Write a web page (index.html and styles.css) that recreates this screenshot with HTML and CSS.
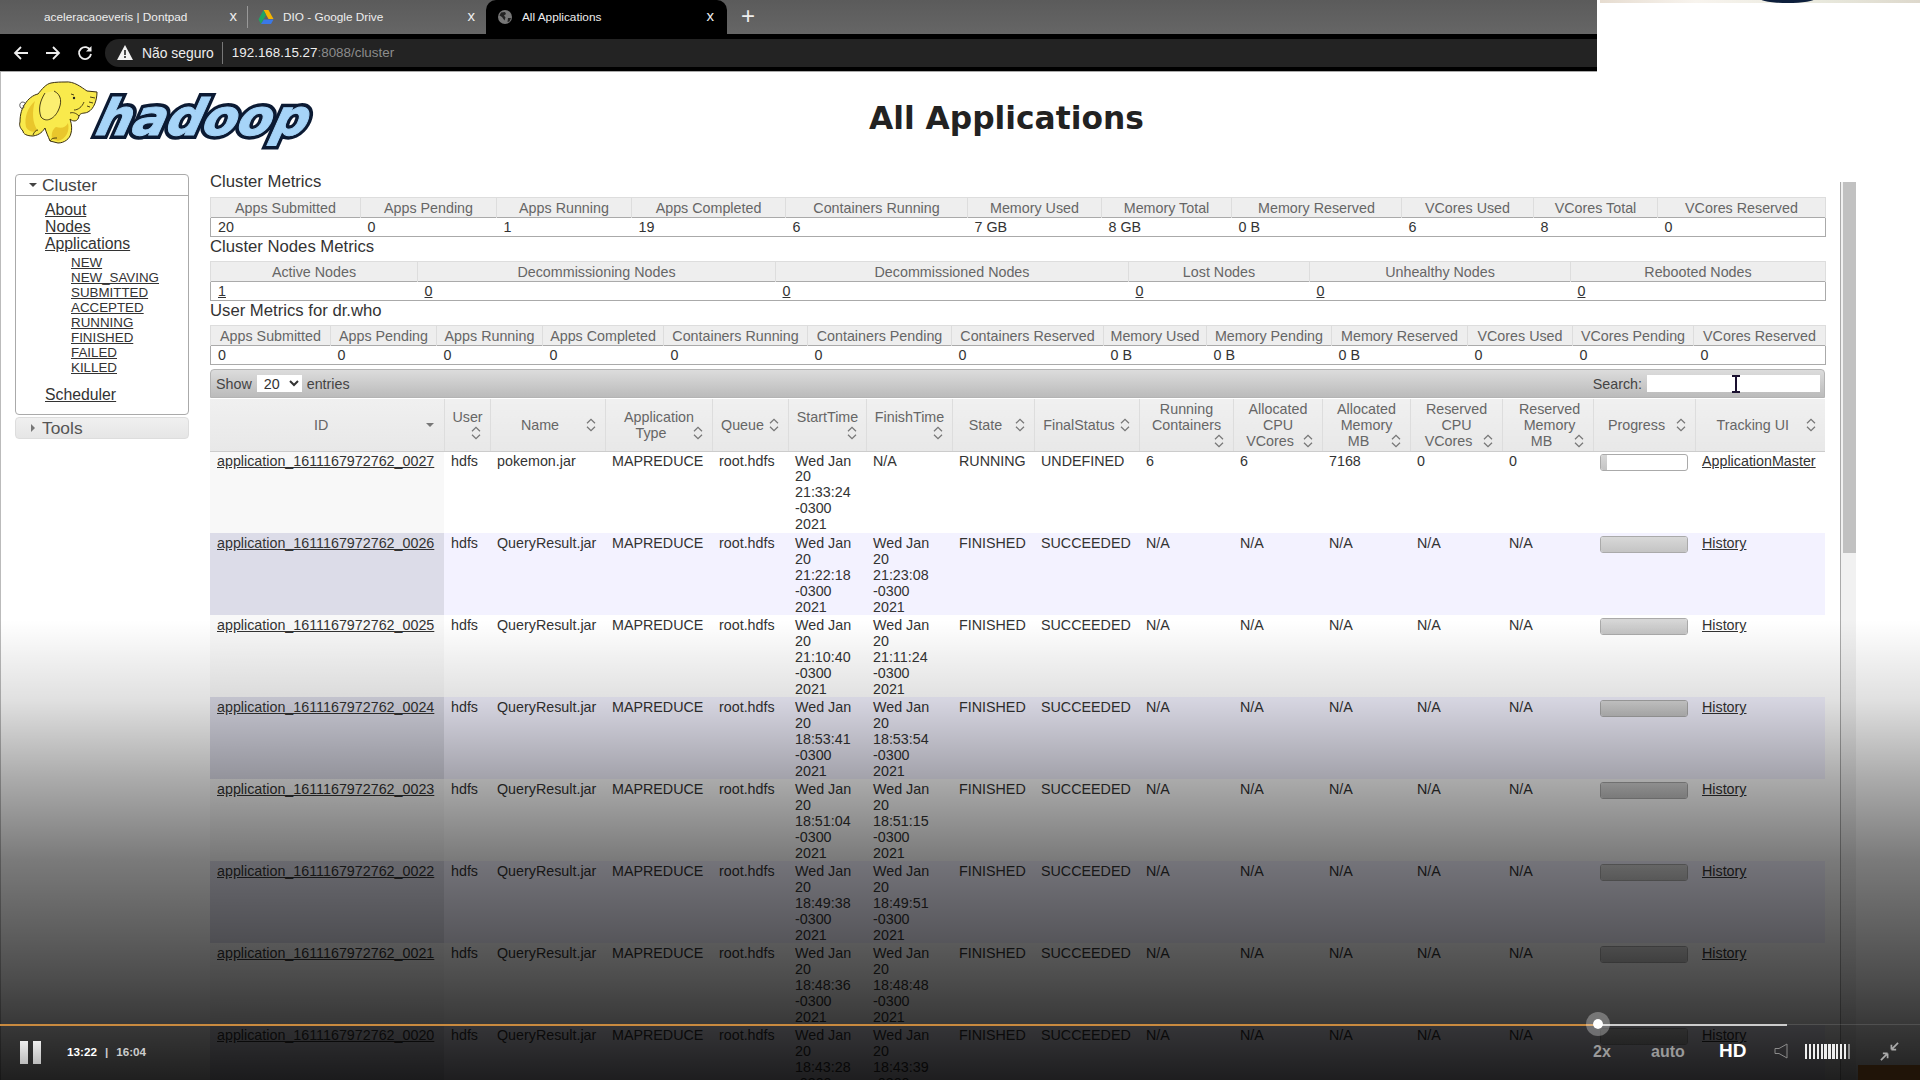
FILE: index.html
```html
<!DOCTYPE html>
<html lang="pt">
<head>
<title>All Applications</title>
<meta charset="UTF-8">
<link rel="stylesheet" href="styles.css">
</head>
<body>
<svg class="defs" width="0" height="0">
 <symbol id="sort" viewBox="0 0 10 14"><path d="M1.5 5.5 5 2l3.5 3.5M1.5 8.5 5 12l3.5-3.5" fill="none" stroke="#777" stroke-width="1.1"/></symbol>
</svg>

<header class="browser">
 <div class="tabs">
  <div class="tab tab-first"><span class="tab-title">aceleracaoeveris | Dontpad</span><span class="tab-x">x</span></div>
  <div class="tab tab-second">
   <svg class="favicon" viewBox="0 0 16 16"><path d="M5.500 1h5l5 9h-5z" fill="#f4b400"/><path d="M5.500 1 0.500 10.500 3 15l5-9z" fill="#1fa463"/><path d="M3 15h10l2.500-4.500H5.800z" fill="#3a78e7"/></svg>
   <span class="tab-title">DIO - Google Drive</span><span class="tab-x">x</span>
  </div>
  <div class="tab tab-active">
   <svg class="favicon" viewBox="0 0 16 16"><circle cx="8" cy="8" r="7" fill="#777"/><path d="M4 3.500 8 3l1 2-2 1.500 1.500 2-1 3L5 8 2.500 6.500zM11 9h3l-1.500 3.500L10.500 13z" fill="#222"/></svg>
   <span class="tab-title">All Applications</span><span class="tab-x">x</span>
  </div>
  <div class="tab-new">+</div>
 </div>
 <div class="toolbar">
  <svg class="nav-icon" viewBox="0 0 18 18"><path d="M16 9H3M9 3 3 9l6 6" fill="none" stroke="#eee" stroke-width="1.800"/></svg>
  <svg class="nav-icon" viewBox="0 0 18 18"><path d="M2 9h13M9 3l6 6-6 6" fill="none" stroke="#eee" stroke-width="1.800"/></svg>
  <svg class="nav-icon" viewBox="0 0 18 18"><path d="M14.500 6.500A6 6 0 1 0 15 10" fill="none" stroke="#eee" stroke-width="1.800"/><path d="M15.500 2v5.500H10z" fill="#eee"/></svg>
  <div class="omnibox">
   <svg class="warn" viewBox="0 0 16 15"><path d="M8 0 16 15H0z" fill="#f2f2f2"/><path d="M7.200 5h1.600v5H7.200zM7.200 11h1.600v2H7.200z" fill="#222"/></svg>
   <span class="insecure">Não seguro</span>
   <span class="url"><b>192.168.15.27</b>:8088/cluster</span>
  </div>
 </div>
</header>

<div class="page">
 <div class="page-head">
  <svg class="logo" viewBox="0 0 306 72" width="306" height="72">
   <text class="logo-word logo-shade" x="0" y="55" textLength="212" lengthAdjust="spacingAndGlyphs" transform="translate(78 0) skewX(-14) translate(14 0)">hadoop</text>
   <text class="logo-word" x="0" y="55" textLength="212" lengthAdjust="spacingAndGlyphs" transform="translate(78 0) skewX(-14) translate(14 0)">hadoop</text>
   <g transform="translate(2 1)">
    <path d="M47 1C56 0 63 6 69 10L79 11C79 19 76 28 70 31 66 33 63 31 61 35 60 41 55 41 52 38 54 44 54 49 53 52 52 58 46 62 40 62L32 60C30 55 28 51 27 47 25 50 22 54 15 55 9 55 5 53 5 50 2 47 1 44 2 41 2 33 4 27 7 23 10 18 15 14 20 13 24 8 28 3 33 2 38 1 43 1 47 1Z" fill="#f9ea4c" stroke="#3a2f10" stroke-width="1"/>
    <path d="M8 46C6 36 10 26 17 20 14 30 14 42 20 50 15 52 10 50 8 46ZM34 58C33 52 35 48 38 46 44 48 48 46 50 42 52 50 48 58 40 60Z" fill="#e9c62c"/>
    <path d="M27 12C22 20 20 28 23 36 28 42 36 38 40 30 44 22 44 14 36 10" fill="#fbef70" stroke="#3a2f10" stroke-width=".9"/>
    <path d="M53 13l3 1M66 21c-2 5-6 8-10 8M72 16l5 1M71 21l4 1M69 25l3 1M61 35c-3-3-6-4-9-3M32 60c2-3 4-3 7-3M15 54c1-3 3-5 5-5" fill="none" stroke="#3a2f10" stroke-width=".9"/>
    <path d="M7 22C3 19 0 24 3 27c2 2 4-1 2-3" fill="none" stroke="#555" stroke-width="1"/>
    <circle cx="56" cy="17" r="1.200" fill="#222"/>
   </g>
  </svg>
  <h1 class="page-title">All Applications</h1>
 </div>

 <div class="layout">
  <nav class="side">
   <div class="side-box">
    <h3 class="side-title"><i class="arrow-down"></i>Cluster</h3>
    <ul class="side-links">
     <li><a href="#">About</a></li>
     <li><a href="#">Nodes</a></li>
     <li><a href="#">Applications</a>
      <ul class="side-sub">
       <li><a href="#">NEW</a></li>
       <li><a href="#">NEW_SAVING</a></li>
       <li><a href="#">SUBMITTED</a></li>
       <li><a href="#">ACCEPTED</a></li>
       <li><a href="#">RUNNING</a></li>
       <li><a href="#">FINISHED</a></li>
       <li><a href="#">FAILED</a></li>
       <li><a href="#">KILLED</a></li>
      </ul>
     </li>
     <li class="side-sched"><a href="#">Scheduler</a></li>
    </ul>
   </div>
   <h3 class="side-closed"><i class="arrow-right"></i>Tools</h3>
  </nav>

  <main class="content">
   <h2 class="metrics-title">Cluster Metrics</h2>
   <table class="metrics m-cluster">
    <colgroup><col><col><col><col><col><col><col><col><col><col><col></colgroup>
    <tr><th>Apps Submitted</th><th>Apps Pending</th><th>Apps Running</th><th>Apps Completed</th><th>Containers Running</th><th>Memory Used</th><th>Memory Total</th><th>Memory Reserved</th><th>VCores Used</th><th>VCores Total</th><th>VCores Reserved</th></tr>
    <tr><td>20</td><td>0</td><td>1</td><td>19</td><td>6</td><td>7 GB</td><td>8 GB</td><td>0 B</td><td>6</td><td>8</td><td>0</td></tr>
   </table>

   <h2 class="metrics-title">Cluster Nodes Metrics</h2>
   <table class="metrics m-nodes">
    <colgroup><col><col><col><col><col><col></colgroup>
    <tr><th>Active Nodes</th><th>Decommissioning Nodes</th><th>Decommissioned Nodes</th><th>Lost Nodes</th><th>Unhealthy Nodes</th><th>Rebooted Nodes</th></tr>
    <tr><td><a href="#">1</a></td><td><a href="#">0</a></td><td><a href="#">0</a></td><td><a href="#">0</a></td><td><a href="#">0</a></td><td><a href="#">0</a></td></tr>
   </table>

   <h2 class="metrics-title">User Metrics for dr.who</h2>
   <table class="metrics m-user">
    <colgroup><col><col><col><col><col><col><col><col><col><col><col><col><col></colgroup>
    <tr><th>Apps Submitted</th><th>Apps Pending</th><th>Apps Running</th><th>Apps Completed</th><th>Containers Running</th><th>Containers Pending</th><th>Containers Reserved</th><th>Memory Used</th><th>Memory Pending</th><th>Memory Reserved</th><th>VCores Used</th><th>VCores Pending</th><th>VCores Reserved</th></tr>
    <tr><td>0</td><td>0</td><td>0</td><td>0</td><td>0</td><td>0</td><td>0</td><td>0 B</td><td>0 B</td><td>0 B</td><td>0</td><td>0</td><td>0</td></tr>
   </table>

   <div class="dt-bar">
    <label class="dt-show">Show <select class="dt-select"><option>20</option></select> entries</label>
    <label class="dt-search">Search: <input class="dt-input" type="text"></label>
   </div>

   <table class="apps">
    <colgroup><col><col><col><col><col><col><col><col><col><col><col><col><col><col><col><col></colgroup>
    <thead>
     <tr>
      <th><i class="sorted"></i>ID</th>
      <th>User<svg class="sort"><use href="#sort"/></svg></th>
      <th>Name<svg class="sort"><use href="#sort"/></svg></th>
      <th>Application Type<svg class="sort"><use href="#sort"/></svg></th>
      <th>Queue<svg class="sort"><use href="#sort"/></svg></th>
      <th>StartTime<svg class="sort"><use href="#sort"/></svg></th>
      <th>FinishTime<svg class="sort"><use href="#sort"/></svg></th>
      <th>State<svg class="sort"><use href="#sort"/></svg></th>
      <th>FinalStatus<svg class="sort"><use href="#sort"/></svg></th>
      <th>Running Containers<svg class="sort"><use href="#sort"/></svg></th>
      <th>Allocated CPU VCores<svg class="sort"><use href="#sort"/></svg></th>
      <th>Allocated Memory MB<svg class="sort"><use href="#sort"/></svg></th>
      <th>Reserved CPU VCores<svg class="sort"><use href="#sort"/></svg></th>
      <th>Reserved Memory MB<svg class="sort"><use href="#sort"/></svg></th>
      <th>Progress<svg class="sort"><use href="#sort"/></svg></th>
      <th>Tracking UI<svg class="sort"><use href="#sort"/></svg></th>
     </tr>
    </thead>
    <tbody>
     <tr><td><a href="#">application_1611167972762_0027</a></td><td>hdfs</td><td>pokemon.jar</td><td>MAPREDUCE</td><td>root.hdfs</td><td>Wed Jan 20 21:33:24 -0300 2021</td><td>N/A</td><td>RUNNING</td><td>UNDEFINED</td><td>6</td><td>6</td><td>7168</td><td>0</td><td>0</td><td><div class="bar"><div class="bar-fill bar-start"></div></div></td><td><a href="#">ApplicationMaster</a></td></tr>
     <tr><td><a href="#">application_1611167972762_0026</a></td><td>hdfs</td><td>QueryResult.jar</td><td>MAPREDUCE</td><td>root.hdfs</td><td>Wed Jan 20 21:22:18 -0300 2021</td><td>Wed Jan 20 21:23:08 -0300 2021</td><td>FINISHED</td><td>SUCCEEDED</td><td>N/A</td><td>N/A</td><td>N/A</td><td>N/A</td><td>N/A</td><td><div class="bar"><div class="bar-fill"></div></div></td><td><a href="#">History</a></td></tr>
     <tr><td><a href="#">application_1611167972762_0025</a></td><td>hdfs</td><td>QueryResult.jar</td><td>MAPREDUCE</td><td>root.hdfs</td><td>Wed Jan 20 21:10:40 -0300 2021</td><td>Wed Jan 20 21:11:24 -0300 2021</td><td>FINISHED</td><td>SUCCEEDED</td><td>N/A</td><td>N/A</td><td>N/A</td><td>N/A</td><td>N/A</td><td><div class="bar"><div class="bar-fill"></div></div></td><td><a href="#">History</a></td></tr>
     <tr><td><a href="#">application_1611167972762_0024</a></td><td>hdfs</td><td>QueryResult.jar</td><td>MAPREDUCE</td><td>root.hdfs</td><td>Wed Jan 20 18:53:41 -0300 2021</td><td>Wed Jan 20 18:53:54 -0300 2021</td><td>FINISHED</td><td>SUCCEEDED</td><td>N/A</td><td>N/A</td><td>N/A</td><td>N/A</td><td>N/A</td><td><div class="bar"><div class="bar-fill"></div></div></td><td><a href="#">History</a></td></tr>
     <tr><td><a href="#">application_1611167972762_0023</a></td><td>hdfs</td><td>QueryResult.jar</td><td>MAPREDUCE</td><td>root.hdfs</td><td>Wed Jan 20 18:51:04 -0300 2021</td><td>Wed Jan 20 18:51:15 -0300 2021</td><td>FINISHED</td><td>SUCCEEDED</td><td>N/A</td><td>N/A</td><td>N/A</td><td>N/A</td><td>N/A</td><td><div class="bar"><div class="bar-fill"></div></div></td><td><a href="#">History</a></td></tr>
     <tr><td><a href="#">application_1611167972762_0022</a></td><td>hdfs</td><td>QueryResult.jar</td><td>MAPREDUCE</td><td>root.hdfs</td><td>Wed Jan 20 18:49:38 -0300 2021</td><td>Wed Jan 20 18:49:51 -0300 2021</td><td>FINISHED</td><td>SUCCEEDED</td><td>N/A</td><td>N/A</td><td>N/A</td><td>N/A</td><td>N/A</td><td><div class="bar"><div class="bar-fill"></div></div></td><td><a href="#">History</a></td></tr>
     <tr><td><a href="#">application_1611167972762_0021</a></td><td>hdfs</td><td>QueryResult.jar</td><td>MAPREDUCE</td><td>root.hdfs</td><td>Wed Jan 20 18:48:36 -0300 2021</td><td>Wed Jan 20 18:48:48 -0300 2021</td><td>FINISHED</td><td>SUCCEEDED</td><td>N/A</td><td>N/A</td><td>N/A</td><td>N/A</td><td>N/A</td><td><div class="bar"><div class="bar-fill"></div></div></td><td><a href="#">History</a></td></tr>
     <tr><td><a href="#">application_1611167972762_0020</a></td><td>hdfs</td><td>QueryResult.jar</td><td>MAPREDUCE</td><td>root.hdfs</td><td>Wed Jan 20 18:43:28 -0300 2021</td><td>Wed Jan 20 18:43:39 -0300 2021</td><td>FINISHED</td><td>SUCCEEDED</td><td>N/A</td><td>N/A</td><td>N/A</td><td>N/A</td><td>N/A</td><td><div class="bar"><div class="bar-fill"></div></div></td><td><a href="#">History</a></td></tr>
    </tbody>
   </table>
  </main>
 </div>
</div>

<!-- things lying over the page -->
<div class="cam"><div class="cam-strip"><span class="cam-blob"></span></div></div>
<div class="scrollbar"><div class="scroll-thumb"></div></div>
<svg class="ibeam" viewBox="0 0 10 18"><path d="M1 1h8M1 17h8M5 1v16" fill="none" stroke="#1a1030" stroke-width="2"/></svg>
<div class="fade"></div>

<div class="player">
 <div class="seek"><div class="seek-done"></div><div class="seek-buffer"></div><div class="seek-knob"></div></div>
 <div class="pause"><span></span><span></span></div>
 <div class="time"><b>13:22</b><span class="time-sep">|</span><span>16:04</span></div>
 <div class="player-right">
  <span class="speed">2x</span>
  <span class="quality">auto</span>
  <span class="hd">HD</span>
  <svg class="speaker" viewBox="0 0 14 16"><path d="M1 5.500h4L13 1v14L5 10.500H1z" fill="none" stroke="#8a8a8a" stroke-width="1"/></svg>
  <div class="volume"><i></i><i></i><i></i><i></i><i></i><i></i><i></i><i></i><i></i><i></i><i></i><i class="vol-off"></i></div>
  <svg class="shrink" viewBox="0 0 20 20"><path d="M1 19l7-7M8 12H3M8 12v5M19 1l-7 7M12 8h5M12 8V3" fill="none" stroke="#aaa" stroke-width="1.800"/></svg>
 </div>
</div>
<div class="corner"></div>
</body>
</html>
```

FILE: styles.css
```css
html, body { margin: 0; height: 1080px; overflow: hidden; background: #fff; }
body { position: relative; font: 14.3px/16px "Liberation Sans", Arial, sans-serif; color: #333; }
a { color: #333; }
.defs { position: absolute; }

/* browser chrome */
.browser { height: 71px; background: #000; border-bottom: 1px solid #aaa; box-sizing: content-box; color: #eee; }
.tabs { display: flex; align-items: stretch; height: 34px; background: linear-gradient(#5b5b5b, #666); font-size: 11.800px; }
.tab { display: flex; align-items: center; position: relative; box-sizing: border-box; }
.tab-first { width: 247px; padding-left: 44px; }
.tab-second { width: 239px; padding-left: 11px; }
.tab-second:before { content: ""; position: absolute; left: 0; top: 6px; bottom: 6px; width: 1px; background: #999; }
.tab-active { width: 241px; padding-left: 11px; background: #000; border-radius: 10px 10px 0 0; }
.favicon { width: 16px; height: 16px; margin-right: 9px; flex: none; }
.tab-x { position: absolute; right: 10px; top: 8px; font-size: 15px; color: #eee; }
.tab-active .tab-x { right: 13px; }
.tab-second .tab-x { right: 11px; }
.tab-new { font-size: 24px; line-height: 32px; margin-left: 14px; color: #eee; }
.toolbar { display: flex; align-items: center; height: 37px; box-sizing: border-box; }
.nav-icon { width: 18px; height: 18px; margin-left: 14px; flex: none; }
.nav-icon:first-child { margin-left: 12px; }
.omnibox { display: flex; align-items: center; flex: 1; height: 28px; margin-left: 11px; padding-left: 12px; background: #232323; border-radius: 14px 0 0 14px; }
.warn { width: 16px; height: 15px; margin-right: 9px; }
.insecure { font-size: 13.900px; padding-right: 8px; border-right: 1px solid #777; line-height: 22px; }
.url { font-size: 13.400px; margin-left: 9px; color: #8c8c8c; }
.url b { font-weight: normal; color: #eee; }

/* hadoop page */
.page { border-left: 1px solid #bbb; height: 1008px; }
.page-head { display: flex; align-items: flex-start; height: 100px; padding: 8px 0 0 15px; box-sizing: border-box; }
.logo { flex: none; display: block; }
.logo-word { font: italic bold 50px "DejaVu Sans", Verdana, sans-serif; fill: #a6d4f8; stroke: #a6d4f8; stroke-width: 1px; }
.logo-shade { fill: #0b1a33; stroke: #0b1a33; stroke-width: 8px; stroke-linejoin: miter; }
.page-title { margin: 19px 0 0 547px; font: bold 31.300px/38px "DejaVu Sans", Verdana, sans-serif; color: #222; white-space: nowrap; }
.layout { display: flex; align-items: flex-start; padding-left: 14px; }

/* sidebar */
.side { width: 174px; margin: 2px 21px 0 0; flex: none; }
.side-box { border: 1px solid #aaa; border-radius: 4px; height: 241px; box-sizing: border-box; }
.side-title, .side-closed { margin: 0; font: normal 17.400px/20px "Liberation Sans", Arial, sans-serif; color: #444; padding-left: 26px; position: relative; }
.side-title { border-bottom: 1px solid #aaa; }
.side-closed { margin-top: 2px; height: 22px; background: linear-gradient(#f0f0f0, #e6e6e6); border: 1px solid #ddd; border-radius: 4px; box-sizing: border-box; line-height: 21px; color: #555; }
.arrow-down { position: absolute; left: 13px; top: 8px; border: 4px solid transparent; border-top-color: #444; border-bottom: 0; }
.arrow-right { position: absolute; left: 15px; top: 6px; border: 4px solid transparent; border-left-color: #777; border-right: 0; }
.side-links { list-style: none; margin: 5px 0 0; padding: 0 0 0 29px; font-size: 15.800px; line-height: 17px; }
.side-sub { list-style: none; margin: 3px 0 0; padding: 0 0 0 26px; font-size: 13.350px; line-height: 15px; }
.side-sched { margin-top: 11px; }

/* metric tables */
.content { width: 1615px; flex: none; }
.metrics-title { margin: 0; padding-top: 1px; font: normal 16.700px/17px "Liberation Sans", Arial, sans-serif; color: #333; height: 24px; }
.metrics + .metrics-title { height: 23px; }
.metrics, .apps { border-collapse: collapse; table-layout: fixed; width: 1615px; }
.metrics th { height: 20px; padding: 0; background: #eee; font-weight: normal; color: #666; border: 1px solid #ddd; border-width: 1px 1px 0 1px; box-sizing: border-box; }
.metrics td { height: 19px; padding: 0 7px; border-top: 1px solid #aaa; border-bottom: 1px solid #aaa; box-sizing: border-box; line-height: 17px; }
.metrics td:first-child { border-left: 1px solid #aaa; }
.metrics td:last-child { border-right: 1px solid #aaa; }
.m-cluster col:nth-child(1) { width: 150px; }
.m-cluster col:nth-child(2) { width: 136px; }
.m-cluster col:nth-child(3) { width: 135px; }
.m-cluster col:nth-child(4) { width: 154px; }
.m-cluster col:nth-child(5) { width: 182px; }
.m-cluster col:nth-child(6) { width: 134px; }
.m-cluster col:nth-child(7) { width: 130px; }
.m-cluster col:nth-child(8) { width: 170px; }
.m-cluster col:nth-child(9) { width: 132px; }
.m-cluster col:nth-child(10) { width: 124px; }
.m-cluster col:nth-child(11) { width: 168px; }
.m-nodes col:nth-child(1) { width: 207px; }
.m-nodes col:nth-child(2) { width: 358px; }
.m-nodes col:nth-child(3) { width: 353px; }
.m-nodes col:nth-child(4) { width: 181px; }
.m-nodes col:nth-child(5) { width: 261px; }
.m-nodes col:nth-child(6) { width: 255px; }
.m-user col:nth-child(1) { width: 120px; }
.m-user col:nth-child(2) { width: 106px; }
.m-user col:nth-child(3) { width: 106px; }
.m-user col:nth-child(4) { width: 121px; }
.m-user col:nth-child(5) { width: 144px; }
.m-user col:nth-child(6) { width: 144px; }
.m-user col:nth-child(7) { width: 152px; }
.m-user col:nth-child(8) { width: 103px; }
.m-user col:nth-child(9) { width: 125px; }
.m-user col:nth-child(10) { width: 136px; }
.m-user col:nth-child(11) { width: 105px; }
.m-user col:nth-child(12) { width: 121px; }
.m-user col:nth-child(13) { width: 132px; }

/* datatable toolbar */
.dt-bar { display: flex; justify-content: space-between; align-items: center; height: 29px; margin-top: 4px; padding: 0 4px 0 5px; box-sizing: border-box; background: linear-gradient(#dcdcdc, #bbb); border: 1px solid #b4b4b4; border-radius: 4px 4px 0 0; color: #444; }
.dt-select { width: 45px; height: 17px; margin: 0 1px; padding: 0 0 0 3px; border: 0; background: #fff; font: inherit; color: #333; }
.dt-input { width: 173px; height: 17px; padding: 0; border: 0; background: #fff; box-sizing: border-box; }
.dt-search { display: flex; align-items: center; gap: 5px; }

/* applications table */
.apps { margin-top: 1px; }
.apps th { height: 52px; padding: 0 6px 0 7px; background: linear-gradient(#f0f0f0, #e8e8e8); font-weight: normal; color: #666; border-right: 1px solid #ddd; border-bottom: 1px solid #ccc; box-sizing: border-box; line-height: 16px; }
.apps th:last-child { border-right: 0; }
.apps th:nth-child(14) { padding-left: 10px; }
.sort { float: right; width: 16px; height: 16px; }
.sorted { float: right; width: 0; margin: 6px 4px 0 0; border: 4px solid transparent; border-top-color: #777; border-bottom: 0; }
.apps td { padding: 3px 7px 0; line-height: 15.800px; vertical-align: top; }
.apps tbody tr:first-child td { padding-top: 2px; padding-bottom: 1px; }
.apps td:nth-child(7) { padding-right: 12px; }
.apps td a { white-space: nowrap; }
.apps tbody tr:nth-child(even) { background: #f3f2ff; }
.apps tbody td:first-child { background: #f8f8f8; }
.apps tbody tr:nth-child(even) td:first-child { background: #dcdce8; }
.apps col:nth-child(1) { width: 234px; }
.apps col:nth-child(2) { width: 46px; }
.apps col:nth-child(3) { width: 115px; }
.apps col:nth-child(4) { width: 107px; }
.apps col:nth-child(5) { width: 76px; }
.apps col:nth-child(6) { width: 78px; }
.apps col:nth-child(7) { width: 86px; }
.apps col:nth-child(8) { width: 82px; }
.apps col:nth-child(9) { width: 105px; }
.apps col:nth-child(10) { width: 94px; }
.apps col:nth-child(11) { width: 89px; }
.apps col:nth-child(12) { width: 88px; }
.apps col:nth-child(13) { width: 92px; }
.apps col:nth-child(14) { width: 91px; }
.apps col:nth-child(15) { width: 102px; }
.apps col:nth-child(16) { width: 130px; }
.bar { height: 17px; width: 88px; box-sizing: border-box; border: 1px solid #aaa; border-radius: 3px; background: #fff; overflow: hidden; }
.bar-fill { height: 100%; background: linear-gradient(#d8d8d8, #c4c4c4); }
.bar-start { width: 6px; }

/* overlays */
.cam { position: absolute; top: 0; right: 0; width: 323px; height: 72px; background: #fff; }
.cam-strip { position: relative; height: 3px; margin-left: 3px; overflow: hidden; background: linear-gradient(90deg, #e6dcd0, #f8f4ee 30%, #e8e8dc 70%, #ddd8cc); }
.cam-blob { position: absolute; left: 160px; top: -6px; width: 55px; height: 9px; border-radius: 50%; background: #0d1f3c; }
.scrollbar { position: absolute; left: 1840px; top: 182px; bottom: 0; width: 16px; background: #f1f1f1; border-left: 1px solid #aaa; box-sizing: border-box; padding-left: 2px; }
.scroll-thumb { height: 371px; background: #c1c1c1; }
.ibeam { position: absolute; left: 1731px; top: 375px; width: 10px; height: 18px; }
.fade { position: absolute; left: 0; right: 0; top: 620px; bottom: 0; pointer-events: none;
  background: linear-gradient(rgba(0,0,0,0) 0, rgba(0,0,0,.12) 80px, rgba(0,0,0,.33) 158px, rgba(0,0,0,.52) 240px, rgba(0,0,0,.70) 360px, rgba(0,0,0,.88) 460px); }

/* video player */
.player { position: absolute; left: 0; right: 0; bottom: 0; height: 56px; display: flex; align-items: center; color: #fff; }
.seek { position: absolute; left: 0; right: 0; top: 0; height: 1px; background: rgba(255,255,255,.12); }
.seek-done { position: absolute; left: 0; top: 0; width: 1598px; height: 1.500px; background: #c98a3f; }
.seek-buffer { position: absolute; left: 1598px; top: 0; width: 189px; height: 1.500px; background: #ccc; }
.seek-knob { position: absolute; left: 1586px; top: -12px; width: 10px; height: 10px; border: 7px solid rgba(255,255,255,.3); border-radius: 50%; background: #fff; background-clip: padding-box; }
.pause { display: flex; gap: 5px; margin: 0 26px 0 20px; }
.pause span { width: 8px; height: 23px; background: linear-gradient(#eee, #bbb); }
.time { font-size: 11.700px; font-weight: bold; color: #ccc; display: flex; }
.time b { color: #fff; }
.time-sep { margin: 0 8px; }
.player-right { margin-left: auto; display: flex; align-items: center; font-weight: bold; font-size: 16px; color: #999; }
.speed { position: absolute; left: 1593px; top: 20px; }
.quality { position: absolute; left: 1651px; top: 20px; }
.hd { position: absolute; left: 1719px; top: 19px; font-size: 19px; color: #fff; }
.speaker { position: absolute; left: 1774px; top: 19px; width: 14px; height: 16px; }
.volume { position: absolute; left: 1805px; top: 20px; display: flex; gap: 1.600px; height: 15px; }
.volume i { width: 2.300px; background: #eee; }
.volume .vol-off { background: #888; }
.shrink { position: absolute; left: 1880px; top: 18px; width: 19px; height: 19px; }
.corner { position: absolute; right: 0; bottom: 0; width: 62px; height: 15px; background: #201408; }
```
